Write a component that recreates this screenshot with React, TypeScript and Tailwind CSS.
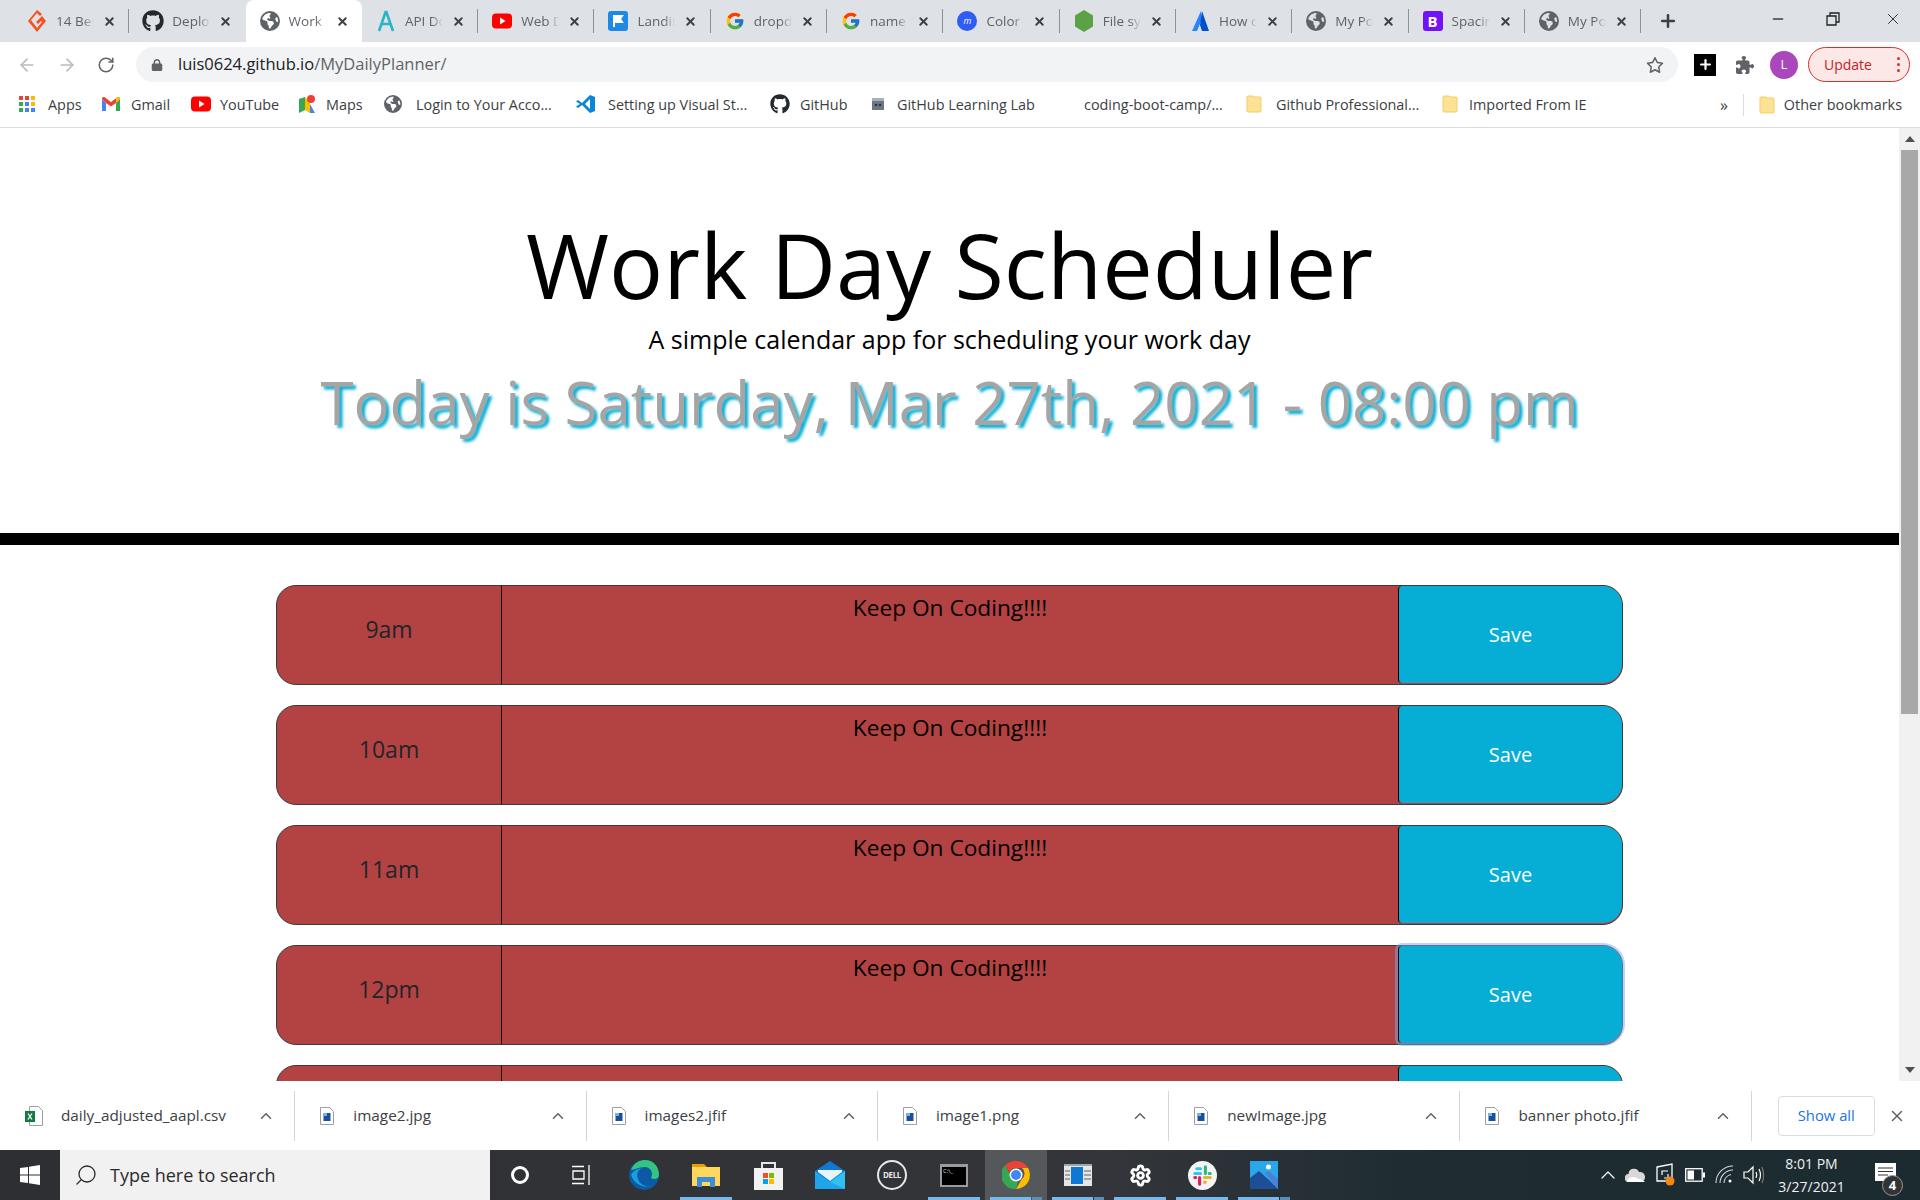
import React from "react";
import { FaGithub, FaPuzzlePiece, FaRegStar, FaLock, FaEarthAmericas } from "react-icons/fa6";
import { FcGoogle } from "react-icons/fc";
import { ArrowLeft, ArrowRight, RotateCw, Plus, X, ChevronUp, Search, Minus, Settings } from "lucide-react";

const chrome = "font-['Open_Sans',sans-serif]";

const Globe = ({ size = 20 }: { size?: number }) => <FaEarthAmericas size={size} className="text-[#5f6368]" />;

const Flag = () => (
  <svg width="20" height="20" viewBox="0 0 20 20">
    <rect width="20" height="20" rx="3" fill="#1e88e5" />
    <path d="M6 4v12M6 5h8l-2 3 2 3H6" stroke="#fff" strokeWidth="2" fill="#fff" />
  </svg>
);

const YouTubeIcon = () => (
  <svg width="20" height="20" viewBox="0 0 20 20">
    <rect y="2.5" width="20" height="15" rx="4" fill="#f00" />
    <path d="M8 6.5v7l5.5-3.5z" fill="#fff" />
  </svg>
);

const tabs: { icon: React.ReactNode; label: string }[] = [
  {
    icon: (
      <svg width="20" height="24" viewBox="0 0 20 24">
        <path d="M10 1 1 12l9 11 9-11-4-5-6 6 2 2 3-3 1 1-5 6-6-8 6-7 3 3 2-2z" fill="#f4511e" />
      </svg>
    ),
    label: "14 Best",
  },
  { icon: <FaGithub size={22} className="text-[#24292e]" />, label: "Deploy" },
  { icon: <Globe />, label: "Work D" },
  {
    icon: (
      <svg width="20" height="24" viewBox="0 0 20 24">
        <path d="M10 2 3 22M10 2l7 20M5 15h10" stroke="#26b5c9" strokeWidth="2.6" fill="none" />
      </svg>
    ),
    label: "API Do",
  },
  { icon: <YouTubeIcon />, label: "Web D" },
  { icon: <Flag />, label: "Landin" },
  { icon: <FcGoogle size={20} />, label: "dropdo" },
  { icon: <FcGoogle size={20} />, label: "name" },
  {
    icon: (
      <div className="w-5 h-5 rounded-full bg-[#2f5cf4] text-white text-[9px] italic flex items-center justify-center">m</div>
    ),
    label: "Color",
  },
  {
    icon: (
      <svg width="20" height="24" viewBox="0 0 20 24">
        <path d="m10 1 9 5.5v11L10 23l-9-5.5v-11z" fill="#5aa245" />
      </svg>
    ),
    label: "File sys",
  },
  {
    icon: (
      <svg width="20" height="24" viewBox="0 0 20 24">
        <path d="M11 2 2 22h5l5-12z" fill="#2684ff" />
        <path d="m12 2 7 20h-7l-2-6z" fill="#0052cc" />
      </svg>
    ),
    label: "How c",
  },
  { icon: <Globe />, label: "My Po" },
  {
    icon: <div className="w-5 h-5 rounded-[3px] bg-[#7311f7] text-white text-[15px] leading-5 text-center font-bold">B</div>,
    label: "Spacin",
  },
  { icon: <Globe />, label: "My Po" },
];

const Folder = () => (
  <svg width="16" height="20" viewBox="0 0 16 20">
    <path d="M1 3a1 1 0 0 1 1-1h5l1 1h6a1 1 0 0 1 1 1v13a1 1 0 0 1-1 1H2a1 1 0 0 1-1-1z" fill="#fde293" stroke="#f0cf6d" />
  </svg>
);

const bookmarks: { icon: React.ReactNode; label: string; cls: string }[] = [
  {
    icon: (
      <svg width="16" height="16" viewBox="0 0 16 16">
        <rect width="4" height="4" fill="#ea4335" />
        <rect x="6" width="4" height="4" fill="#ea4335" />
        <rect x="12" width="4" height="4" fill="#fbbc04" />
        <rect y="6" width="4" height="4" fill="#34a853" />
        <rect x="6" y="6" width="4" height="4" fill="#4285f4" />
        <rect x="12" y="6" width="4" height="4" fill="#fbbc04" />
        <rect y="12" width="4" height="4" fill="#34a853" />
        <rect x="6" y="12" width="4" height="4" fill="#4285f4" />
        <rect x="12" y="12" width="4" height="4" fill="#4285f4" />
      </svg>
    ),
    label: "Apps",
    cls: "w-[83px] gap-[13px]",
  },
  {
    icon: (
      <svg width="18" height="14" viewBox="0 0 18 14">
        <path d="M0 2v12h4V6z" fill="#4285f4" />
        <path d="M18 2v12h-4V6z" fill="#34a853" />
        <path d="M0 2c0-2 2-2.500 3-1.500L9 5l6-4.500c1-1 3-.5 3 1.500l-4 4-5 3.500L4 6z" fill="#ea4335" />
        <path d="M14 .9 15 .4c1-.9 3-.5 3 1.600l-4 4z" fill="#fbbc04" />
      </svg>
    ),
    label: "Gmail",
    cls: "w-[89px] gap-[11px]",
  },
  { icon: <YouTubeIcon />, label: "YouTube", cls: "w-[107px] gap-[9px]" },
  {
    icon: (
      <svg width="18" height="20" viewBox="0 0 18 20">
        <path d="M1 5v14l6-3V3z" fill="#34a853" />
        <path d="M7 3v13l5 3V9z" fill="#fbbc04" />
        <path d="m12 10 5 9-5 0z" fill="#4285f4" />
        <circle cx="13" cy="5" r="4" fill="#ea4335" />
      </svg>
    ),
    label: "Maps",
    cls: "w-[86px] gap-[10px]",
  },
  { icon: <Globe size={18} />, label: "Login to Your Acco...", cls: "w-[192px] gap-[14px]" },
  {
    icon: (
      <svg width="20" height="20" viewBox="0 0 20 20">
        <path d="M14 1 6 9 2 6 0 7.500 4 10l-4 2.500L2 14l4-3 8 8 5-2V3z" fill="#0a84d6" />
        <path d="m14 5-5 5 5 5z" fill="#fff" />
      </svg>
    ),
    label: "Setting up Visual St...",
    cls: "w-[194px] gap-[12px]",
  },
  { icon: <FaGithub size={20} className="text-[#24292e]" />, label: "GitHub", cls: "w-[100px] gap-[10px]" },
  {
    icon: (
      <svg width="16" height="16" viewBox="0 0 16 16">
        <path d="M2 2h12v12H2z" fill="#6d7683" />
        <path d="M2 2h12v3H2z" fill="#a9b0ba" />
        <circle cx="6" cy="9" r="1.300" fill="#2a3442" />
        <circle cx="10" cy="9" r="1.300" fill="#2a3442" />
      </svg>
    ),
    label: "GitHub Learning Lab",
    cls: "w-[214px] gap-[11px]",
  },
  { icon: null, label: "coding-boot-camp/...", cls: "w-[162px]" },
  { icon: <Folder />, label: "Github Professional...", cls: "w-[196px] gap-[14px]" },
  { icon: <Folder />, label: "Imported From IE", cls: "gap-[11px]" },
];

const Toolbar = () => (
  <div className="h-[42px] flex items-center bg-white pt-[3px]">
    <div className="w-[136px] flex items-center pl-[17px] gap-[20px]">
      <ArrowLeft size={20} className="text-[#b9bbbe]" />
      <ArrowRight size={20} className="text-[#b9bbbe]" />
      <RotateCw size={18} className="text-[#5f6368]" />
    </div>
    <div className="w-[1542px] h-[35px] rounded-full bg-[#f1f3f4] flex items-center pl-[15px] pr-[14px]">
      <FaLock size={12} className="text-[#5f6368]" />
      <span className="ml-[15px] text-[16.500px] text-[#202124]">
        luis0624.github.io<span className="text-[#5f6368]">/MyDailyPlanner/</span>
      </span>
      <FaRegStar size={18} className="ml-auto text-[#5f6368]" />
    </div>
    <div className="w-[22px] h-[22px] bg-black text-white flex items-center justify-center ml-[16px]">
      <Plus size={15} strokeWidth={3.5} />
    </div>
    <FaPuzzlePiece size={18} className="text-[#5f6368] ml-[20px]" />
    <div className="w-7 h-7 rounded-full bg-[#ab47bc] text-white text-[13px] flex items-center justify-center ml-[16px]">L</div>
    <div className="ml-[10px] w-[102px] h-[35px] rounded-full border border-[#d93025] bg-[#fce8e6] flex items-center pl-[15px] text-[14px] text-[#c5221f]">
      Update
      <div className="ml-auto mr-[9px] flex flex-col gap-[3px]">
        <div className="w-[3px] h-[3px] rounded-full bg-[#d93025]" />
        <div className="w-[3px] h-[3px] rounded-full bg-[#d93025]" />
        <div className="w-[3px] h-[3px] rounded-full bg-[#d93025]" />
      </div>
    </div>
  </div>
);

const TabStrip = () => (
  <div className="h-[42px] bg-[#dee1e6] flex items-end pl-[13px]">
    {tabs.map((t, i) => (
      <div
        key={i}
        className={
          i === 2
            ? "w-[116.300px] h-[42px] bg-white rounded-t-lg flex items-center pl-[13px] pr-[8px]"
            : "w-[116.300px] h-[42px] flex items-center pl-[13px] pr-[8px]"
        }
      >
        <div className="w-[22px] flex justify-center">{t.icon}</div>
        <span className="ml-[8px] w-[38px] overflow-hidden whitespace-nowrap text-[13.500px] text-[#5f6368] [mask-image:linear-gradient(to_right,#000_70%,transparent)]">
          {t.label}
        </span>
        <X size={13} strokeWidth={3.5} className="ml-[9px] text-[#3c4043]" />
        {i !== 1 && i !== 2 && <div className="w-px h-[24px] bg-[#8f9296] ml-auto -mr-[8px]" />}
      </div>
    ))}
    <Plus size={20} strokeWidth={3} className="ml-[17px] mb-[11px] text-[#3c4043]" />
    <div className="ml-auto flex items-center h-[42px] pb-[4px]">
      <Minus size={16} className="text-[#3c4043] mr-[40px]" />
      <svg width="14" height="14" viewBox="0 0 14 14" className="mr-[44px]">
        <path d="M1 4h9v9H1zM4 4V1h9v9h-3" fill="none" stroke="#202124" strokeWidth="1.300" />
      </svg>
      <X size={18} strokeWidth={1.200} className="text-[#202124] mr-[18px]" />
    </div>
  </div>
);

const BookmarkBar = () => (
  <div className="h-[44px] bg-white border-b border-[#dadce0] flex items-center pl-[19px] pb-[2px] text-[14.400px] text-[#3c4043]">
    {bookmarks.map((b, i) => (
      <div key={i} className={"flex items-center whitespace-nowrap " + b.cls}>
        {b.icon}
        <span>{b.label}</span>
      </div>
    ))}
    <div className="ml-auto flex items-center">
      <span className="text-[16px] mr-[15px]">»</span>
      <div className="w-px h-[22px] bg-[#dadce0] mr-[15px]" />
      <Folder />
      <span className="ml-[9px] mr-[18px]">Other bookmarks</span>
    </div>
  </div>
);

const hours = ["9am", "10am", "11am", "12pm"];

const saveBase = "w-[224px] shrink-0 mb-px bg-[#06aed5] text-white text-[20px] pt-[1px] rounded-r-[19px] rounded-l-[4px] border-l border-black";

const Scheduler = () => (
  <div className="flex-1 overflow-hidden bg-white text-[#212529]">
    <div className="h-[405px] flex flex-col items-center text-center">
      <h1 className="mt-[82px] text-[90px] leading-[108px] text-black">Work Day Scheduler</h1>
      <p className="text-[25px] leading-[36px] mt-[3px] text-black">A simple calendar app for scheduling your work day</p>
      <p className="text-[60px] leading-[72px] mt-[9px] text-[#a5a5a5] [text-shadow:3px_3px_3px_#06aed5]">
        Today is Saturday, Mar 27th, 2021 - 08:00 pm
      </p>
    </div>
    <div className="h-3 bg-black" />
    <div className="mt-10 flex flex-col gap-5 w-[1347px] ml-[276px]">
      {hours.map((h, i) => (
        <div key={h} className="h-[100px] shrink-0 flex bg-[#b24342] border border-[#3b3b3f] rounded-[20px]">
          <div className="w-[225px] shrink-0 flex items-center justify-center pb-[12px] text-[23px] text-[#212529] border-r border-black">{h}</div>
          <div className="flex-1 text-center text-[22.700px] leading-[36px] pt-[4px] text-black">Keep On Coding!!!!</div>
          <button
            className={i === 3 ? saveBase + " shadow-[0_0_0_3px_rgba(120,170,240,0.5)]" : saveBase}
          >
            Save
          </button>
        </div>
      ))}
      {/* fifth row only peeks in above the downloads bar */}
      <div className="h-[100px] shrink-0 flex bg-[#b24342] border border-[#3b3b3f] rounded-[20px]">
        <div className="w-[225px] shrink-0 border-r border-black" />
        <div className="flex-1" />
        <div className={saveBase} />
      </div>
    </div>
  </div>
);

const Scrollbar = () => (
  <div className="w-[21px] bg-[#f1f1f1] flex flex-col items-center">
    <div className="h-[22px] flex items-center justify-center">
      <div className="w-0 h-0 border-x-[5px] border-x-transparent border-b-[6px] border-b-[#505050]" />
    </div>
    <div className="w-[17px] h-[564px] bg-[#a8a8a8]" />
    <div className="mt-auto h-[22px] flex items-center justify-center">
      <div className="w-0 h-0 border-x-[5px] border-x-transparent border-t-[6px] border-t-[#505050]" />
    </div>
  </div>
);

const FileIcon = () => (
  <svg width="14" height="18" viewBox="0 0 14 18">
    <path d="M.5.500h9l4 4v13H.500z" fill="#fff" stroke="#9aa0a6" />
    <rect x="3.500" y="6" width="7" height="8" fill="#1a4fa0" />
    <rect x="3.500" y="6" width="3.500" height="3" fill="#6fb6ea" />
  </svg>
);

const downloads = [
  { name: "daily_adjusted_aapl.csv", xls: true },
  { name: "image2.jpg" },
  { name: "images2.jfif" },
  { name: "image1.png" },
  { name: "newImage.jpg" },
  { name: "banner photo.jfif" },
];

const DownloadBar = () => (
  <div className="h-[69px] bg-white flex items-center pl-[4px]">
    {downloads.map((d) => (
      <div
        key={d.name}
        className={
          d.xls
            ? "w-[291.300px] h-[50px] flex items-center border-r border-[#d2d4d6] pl-[21px] pr-[19px]"
            : "w-[291.300px] h-[50px] flex items-center border-r border-[#d2d4d6] pl-[25px] pr-[19px]"
        }
      >
        {d.xls ? (
          <svg width="18" height="20" viewBox="0 0 18 20">
            <path d="M4.500.500h9l4 4v15h-13z" fill="#fff" stroke="#9aa0a6" />
            <rect y="5" width="10" height="11" fill="#107c41" />
            <path d="m3 7.500 4 6m0-6-4 6" stroke="#fff" strokeWidth="1.300" />
          </svg>
        ) : (
          <FileIcon />
        )}
        <span className={d.xls ? "ml-[18px] text-[15.300px] text-[#3c4043]" : "ml-[19px] text-[15.300px] text-[#3c4043]"}>{d.name}</span>
        <ChevronUp size={18} className="ml-auto text-[#5f6368]" />
      </div>
    ))}
    <div className="ml-[26px] w-[97px] h-[40px] border border-[#dadce0] rounded-[4px] flex items-center justify-center text-[14.800px] text-[#1a73e8]">
      Show all
    </div>
    <X size={18} className="ml-[13px] text-[#5f6368]" />
  </div>
);

const Underline = ({ split }: { split?: boolean }) => (
  <div className="absolute bottom-0 left-[5px] right-[5px] h-[3px] flex">
    <div className="flex-1 bg-[#76b9ed]" />
    {split && <div className="w-[10px] ml-px bg-[#5b8db5]" />}
  </div>
);

const TaskIcon = ({ children, on, active, split }: { children: React.ReactNode; on?: boolean; active?: boolean; split?: boolean }) => (
  <div className={active ? "relative w-[62px] h-full flex items-center justify-center bg-[#55585b]" : "relative w-[62px] h-full flex items-center justify-center"}>
    {children}
    {on && <Underline split={split} />}
  </div>
);

const Taskbar = () => (
  <div className="h-[50px] bg-[linear-gradient(to_right,#2d2f32_0%,#33353a_58%,#1f2d33_73%,#1c2b30_100%)] flex items-center text-white">
    <div className="w-[60px] flex justify-center">
      <svg width="20" height="20" viewBox="0 0 20 20" fill="#fff">
        <path d="M0 3l8-1v7.500H0zM9 1.800 20 0v9.500H9zM0 10.500h8V18l-8-1zM9 10.500h11V20L9 18.200z" />
      </svg>
    </div>
    <div className="w-[430px] h-full bg-[#f1f1f1] flex items-center pl-[14px] text-[#2b2b2b] text-[18px]">
      <Search size={24} strokeWidth={1.300} className="-scale-x-100" />
      <span className="ml-[12px]">Type here to search</span>
    </div>
    <div className="w-[60px] flex justify-center">
      <div className="w-[18px] h-[18px] rounded-full border-[3px] border-white" />
    </div>
    <div className="w-[63px] flex justify-center">
      <svg width="20" height="20" viewBox="0 0 20 20" fill="none" stroke="#fff" strokeWidth="1.300">
        <path d="M0 1.500h12M0 18.500h12M1 6h11v8H1zM17 0v20" />
      </svg>
    </div>
    <div className="flex h-full items-center">
      <TaskIcon>
        <svg width="30" height="30" viewBox="0 0 30 30">
          <circle cx="15" cy="15" r="15" fill="#0c59a4" />
          <path d="M2 10C5 2 12 0 16 0c8 0 14 6 14 15 0 4-5 5-8 3 3-6-1-11-6-11C9 7 6 10 2 10z" fill="#33c481" />
          <path d="M15 8c-6 0-8 6-6 11 2 6 9 9 15 7-9 3-19-2-22-11 2-4 7-7 13-7z" fill="#1b9de2" />
        </svg>
      </TaskIcon>
      <TaskIcon on>
        <svg width="28" height="24" viewBox="0 0 28 24">
          <path d="M0 1h12l3 3H0z" fill="#e2a100" />
          <path d="M0 4h28v19H0z" fill="#ffd75e" />
          <path d="M5 24v-10h18v10h-5v-5h-8v5z" fill="#3a8fd8" />
        </svg>
      </TaskIcon>
      <TaskIcon>
        <svg width="29" height="30" viewBox="0 0 29 30">
          <path d="M8 9V3h13v6" fill="none" stroke="#e6e6e6" strokeWidth="2" />
          <rect y="8" width="29" height="22" fill="#f2f2f2" />
          <rect x="9" y="13" width="5" height="5" fill="#f25022" />
          <rect x="15" y="13" width="5" height="5" fill="#7fba00" />
          <rect x="9" y="19" width="5" height="5" fill="#00a4ef" />
          <rect x="15" y="19" width="5" height="5" fill="#ffb900" />
        </svg>
      </TaskIcon>
      <TaskIcon>
        <svg width="30" height="28" viewBox="0 0 30 28">
          <path d="M15 0 30 10v18H0V10z" fill="#0f78d4" />
          <path d="M3 9h24v2L15 20 3 11z" fill="#e8f4fc" />
          <path d="M0 10v18h30V10L15 21z" fill="#1fa6ea" />
          <path d="M15 21 30 10v18z" fill="#30c0f2" />
        </svg>
      </TaskIcon>
      <TaskIcon>
        <div className="w-[30px] h-[30px] rounded-full border-2 border-[#e8e8e8] flex items-center justify-center text-[8px] font-bold tracking-tighter text-[#e8e8e8]">DELL</div>
      </TaskIcon>
      <TaskIcon on>
        <div className="w-[28px] h-[23px] bg-black border-2 border-t-[3px] border-[#9b9b9b] text-[6px] leading-[8px] pl-px text-[#dddddd]">C:\_</div>
      </TaskIcon>
      <TaskIcon on active split>
        <svg width="28" height="28" viewBox="0 0 28 28">
          <path d="M14 0a14 14 0 0 1 12.100 7H14a7 7 0 0 0-6.500 4.500L3 4.500A14 14 0 0 1 14 0z" fill="#ea4335" />
          <path d="M26.100 7A14 14 0 0 1 14 28l5.800-10a7 7 0 0 0 .2-11z" fill="#fbbc04" />
          <path d="M14 28A14 14 0 0 1 3 4.500l6 10.500a7 7 0 0 0 7 6z" fill="#34a853" />
          <circle cx="14" cy="14" r="6.500" fill="#fff" />
          <circle cx="14" cy="14" r="5" fill="#4285f4" />
        </svg>
      </TaskIcon>
      <TaskIcon on split>
        <svg width="28" height="22" viewBox="0 0 28 22">
          <rect width="28" height="22" fill="#e6e6e6" />
          <rect width="28" height="2" fill="#9aa5b0" />
          <rect x="7" y="3" width="12" height="17" fill="#0f78d4" />
          <path d="M1 7h5M1 11h5M1 15h5M20 7h7M20 11h7M20 15h7" stroke="#8d8d8d" strokeWidth="1.500" />
        </svg>
      </TaskIcon>
      <TaskIcon on>
        <Settings size={23} strokeWidth={3} />
      </TaskIcon>
      <TaskIcon on>
        <svg width="29" height="29" viewBox="0 0 30 30">
          <circle cx="15" cy="15" r="15" fill="#f4f4f4" />
          <path d="M13 8h-4M13 13H7" stroke="#36c5f0" strokeWidth="3.200" strokeLinecap="round" />
          <path d="M18 6v7M23 13h-1" stroke="#2eb67d" strokeWidth="3.200" strokeLinecap="round" />
          <path d="M17 17h6M17 22h1" stroke="#ecb22e" strokeWidth="3.200" strokeLinecap="round" />
          <path d="M12 17v7M7 17h1" stroke="#e01e5a" strokeWidth="3.200" strokeLinecap="round" />
        </svg>
      </TaskIcon>
      <TaskIcon on split>
        <svg width="28" height="28" viewBox="0 0 28 28">
          <rect width="28" height="28" fill="#2aa7e8" />
          <circle cx="18.500" cy="6" r="2.500" fill="#fff" />
          <path d="M0 28V17l9-7 10 9 9 9z" fill="#1d4e96" />
          <path d="M15 12l3-2 10 8v10z" fill="#4c7fd6" />
        </svg>
      </TaskIcon>
    </div>
    <div className="ml-auto flex items-center h-full">
      <ChevronUp size={24} strokeWidth={1.200} />
      <svg width="20" height="14" viewBox="0 0 20 14" className="ml-[5px]">
        <path d="M4 14a4 4 0 0 1-.5-8A5.500 5.500 0 0 1 14 4a5 5 0 0 1 6 5 5 5 0 0 1-3 5z" fill="#d8d8d8" />
        <path d="M2 14c0-2 2-5 6-5s4 2 6 2 4 1 6 3z" fill="#fff" />
      </svg>
      <svg width="20" height="26" viewBox="0 0 20 26" className="ml-[10px]">
        <path d="M2 5l15-3v17H2z" fill="none" stroke="#fff" strokeWidth="1.300" />
        <path d="M7 13V9h6M13 12v4H9" stroke="#fff" strokeWidth="1.200" fill="none" />
        <circle cx="15" cy="19" r="4.500" fill="#f7860f" />
      </svg>
      <svg width="20" height="14" viewBox="0 0 20 14" className="ml-[10px]">
        <rect x=".7" y=".7" width="16.500" height="12.500" fill="none" stroke="#fff" strokeWidth="1.300" />
        <rect x="2.500" y="2.500" width="6.500" height="9" fill="#fff" />
        <rect x="18" y="4.500" width="2" height="5" fill="#fff" />
      </svg>
      <svg width="20" height="20" viewBox="0 0 20 20" fill="none" stroke="#d8d8d8" strokeWidth="1.100" className="ml-[10px]">
        <path d="M1 18A17 17 0 0 1 18 1M5 18A13 13 0 0 1 18 5M9 18a9 9 0 0 1 7-8.500" />
        <circle cx="15" cy="16" r="1.500" fill="#fff" stroke="none" />
      </svg>
      <svg width="22" height="20" viewBox="0 0 22 20" fill="none" stroke="#fff" strokeWidth="1.200" className="ml-[8px]">
        <path d="M1 7h4l5-5v16l-5-5H1zM13 7c1 2 1 4 0 6M16 4c2 4 2 8 0 12" />
        <path d="M19 2c2 5 2 11 0 16" stroke="#777" />
      </svg>
      <div className="ml-[3px] w-[87px] text-center text-[14px] leading-[23px] text-[#f0f0f0]">
        <div>8:01 PM</div>
        <div>3/27/2021</div>
      </div>
      <div className="relative w-[60px] h-full flex items-center justify-center mr-[5px]">
        <svg width="21" height="22" viewBox="0 0 21 22" className="-mt-[3px]">
          <path d="M0 0h21v18H0z" fill="#fff" />
          <path d="M3 5h15M3 8.500h15M3 12h10" stroke="#333" strokeWidth="1.200" />
        </svg>
        <div className="absolute left-[27px] bottom-[4px] w-[21px] h-[21px] rounded-full bg-[#333] border border-[#999] text-[13px] font-bold flex items-center justify-center">4</div>
      </div>
    </div>
  </div>
);

export default function App() {
  return (
    <div className={"h-screen flex flex-col overflow-hidden " + chrome}>
      <TabStrip />
      <Toolbar />
      <BookmarkBar />
      <div className="flex-1 min-h-0 flex">
        <Scheduler />
        <Scrollbar />
      </div>
      <DownloadBar />
      <Taskbar />
    </div>
  );
}
